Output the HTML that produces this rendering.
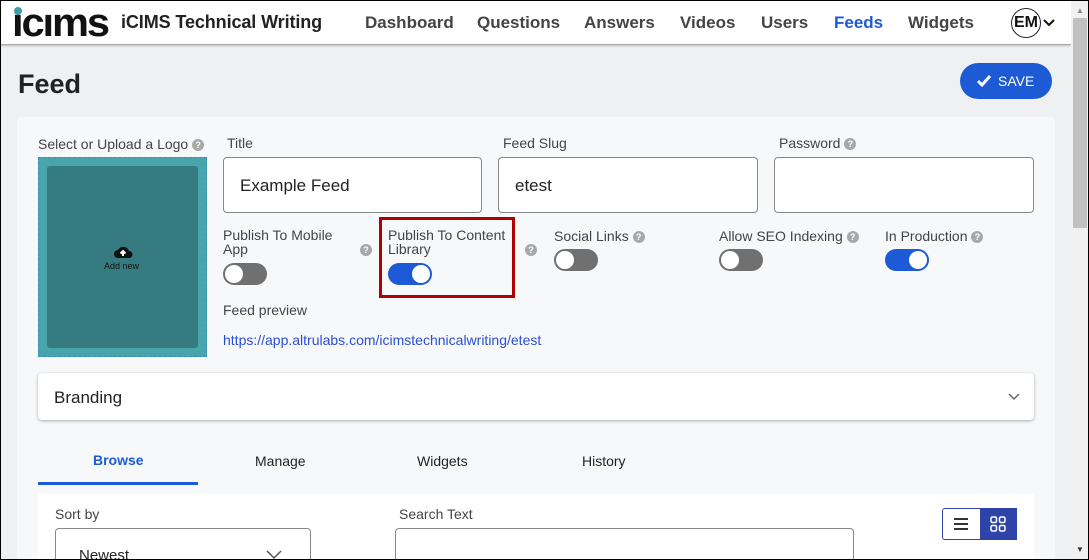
<!DOCTYPE html>
<html><head><meta charset="utf-8"><style>
*{box-sizing:border-box;margin:0;padding:0}
html{width:1089px;height:560px;overflow:hidden}
body{width:1089px;height:560px;overflow:hidden;font-family:"Liberation Sans",Arial,sans-serif;background:#eef0f1;position:relative;color:#333}
.frame{position:absolute;left:0;top:0;width:1089px;height:560px;border:1px solid #000;pointer-events:none;z-index:10}
.abs{position:absolute}
.hdr{position:absolute;left:0;top:0;width:1071px;height:45px;background:#fff;border-bottom:1px solid #aaa;box-shadow:0 1px 2px rgba(0,0,0,.2)}
.nav{position:absolute;top:13px;font-size:17px;font-weight:bold;color:#444}
.sb{position:absolute;left:1071px;top:0;width:18px;height:560px;background:#f0f0f0}
.card{position:absolute;left:17px;top:117px;width:1038px;height:443px;background:#f7f8f9;border-radius:4px}
.lbl{position:absolute;font-size:14px;color:#444}
.q{display:inline-block;width:12px;height:12px;border-radius:50%;background:#a8a8a8;color:#fff;font-size:9px;font-weight:bold;text-align:center;line-height:12px;vertical-align:middle}
.inp{position:absolute;height:56px;background:#fff;border:1px solid #888;border-radius:4px;font-size:17px;color:#222;padding:18px 16px}
.tg{position:absolute;width:44px;height:22px;border-radius:11px;background:#707070}
.tg::after{content:"";position:absolute;left:2px;top:2px;width:18px;height:18px;border-radius:50%;background:#fff}
.tg.on{background:#1d5bd6}
.tg.on::after{left:24px}
</style></head><body>
<div class="hdr">
  <div class="abs" style="left:12px;top:3px;font-size:40px;font-weight:bold;color:#111;letter-spacing:-2px;line-height:40px;transform:scaleX(1.04);transform-origin:left">ıcıms</div>
  <div class="abs" style="left:14px;top:7px;width:8px;height:8px;border-radius:50%;background:#3aa0a6"></div>
  <div class="abs" style="left:121px;top:12px;font-size:18px;font-weight:bold;color:#222;letter-spacing:-0.1px">iCIMS Technical Writing</div>
  <div class="nav" style="left:365px">Dashboard</div>
  <div class="nav" style="left:477px">Questions</div>
  <div class="nav" style="left:584px">Answers</div>
  <div class="nav" style="left:680px">Videos</div>
  <div class="nav" style="left:761px">Users</div>
  <div class="nav" style="left:834px;color:#1d5bd6">Feeds</div>
  <div class="nav" style="left:908px">Widgets</div>
  <div class="abs" style="left:1011px;top:8px;width:30px;height:30px;border-radius:50%;border:1.5px solid #223;font-size:16px;font-weight:bold;color:#111;text-align:center;line-height:27px">EM</div>
  <svg class="abs" style="left:1042px;top:18px" width="14" height="10"><path d="M2 2l5 5 5-5" stroke="#111" stroke-width="2" fill="none"/></svg>
</div>
<div class="sb"><div class="abs" style="left:2px;top:18px;width:14px;height:210px;background:#c1c1c1"></div>
<div class="abs" style="left:5px;top:6px;font-size:8px;color:#888">▲</div><div class="abs" style="left:5px;top:545px;font-size:8px;color:#333">▼</div></div>
<div class="abs" style="left:18px;top:69px;font-size:27px;font-weight:bold;color:#222">Feed</div>
<div class="abs" style="left:960px;top:63px;width:92px;height:36px;border-radius:18px;background:#1d5bd6;color:#fff;font-size:14px;line-height:36px;padding-left:38px">SAVE</div>
<svg class="abs" style="left:976px;top:74px" width="16" height="14"><path d="M2 7l4 4 8-9" stroke="#fff" stroke-width="3" fill="none"/></svg>
<div class="card"></div>
<div class="lbl" style="left:38px;top:136px">Select or Upload a Logo <span class="q">?</span></div>
<div class="abs" style="left:38px;top:157px;width:169px;height:200px;background:#47a5ab;border:1px dashed #3a8fc7"></div>
<div class="abs" style="left:47px;top:166px;width:151px;height:182px;background:#367b80;border-radius:3px"></div>
<svg class="abs" style="left:113px;top:244px" width="20" height="16"><path d="M5 14a4 4 0 0 1 0-8 6 6 0 0 1 11 1 3.5 3.5 0 0 1 0 7z" fill="#111"/><path d="M10 12V7M7.5 9.5L10 7l2.5 2.5" stroke="#fff" stroke-width="2" fill="none"/></svg>
<div class="abs" style="left:104px;top:261px;font-size:9px;color:#111">Add new</div>
<div class="lbl" style="left:227px;top:135px">Title</div>
<div class="lbl" style="left:503px;top:135px">Feed Slug</div>
<div class="lbl" style="left:779px;top:135px">Password <span class="q">?</span></div>
<div class="inp" style="left:223px;top:157px;width:259px">Example Feed</div>
<div class="inp" style="left:498px;top:157px;width:260px">etest</div>
<div class="inp" style="left:774px;top:157px;width:260px"></div>
<div class="lbl" style="left:223px;top:228px;line-height:14px">Publish To Mobile<br>App</div><span class="q abs" style="left:360px;top:244px">?</span>
<div class="tg" style="left:223px;top:263px"></div>
<div class="lbl" style="left:388px;top:228px;line-height:14px">Publish To Content<br>Library</div><span class="q abs" style="left:525px;top:244px">?</span>
<div class="tg on" style="left:388px;top:263px"></div>
<div class="abs" style="left:379px;top:217px;width:136px;height:81px;border:3px solid #b00000"></div>
<div class="lbl" style="left:554px;top:228px">Social Links <span class="q">?</span></div>
<div class="tg" style="left:554px;top:249px"></div>
<div class="lbl" style="left:719px;top:228px">Allow SEO Indexing <span class="q">?</span></div>
<div class="tg" style="left:719px;top:249px"></div>
<div class="lbl" style="left:885px;top:228px">In Production <span class="q">?</span></div>
<div class="tg on" style="left:885px;top:249px"></div>
<div class="lbl" style="left:223px;top:302px">Feed preview</div>
<div class="lbl" style="left:223px;top:332px;color:#2b4fd0">https://app.altrulabs.com/icimstechnicalwriting/etest</div>
<div class="abs" style="left:38px;top:373px;width:996px;height:47px;background:#fff;border-radius:4px;box-shadow:0 1px 3px rgba(0,0,0,.3)"></div>
<div class="abs" style="left:54px;top:388px;font-size:17px;color:#222">Branding</div>
<svg class="abs" style="left:1007px;top:392px" width="14" height="10"><path d="M2 2l5 5 5-5" stroke="#666" stroke-width="1.5" fill="none"/></svg>
<div class="abs" style="left:93px;top:452px;font-size:14px;font-weight:bold;color:#1d5bd6">Browse</div>
<div class="abs" style="left:38px;top:482px;width:160px;height:3px;background:#1d5bd6"></div>
<div class="lbl" style="left:255px;top:453px;color:#222">Manage</div>
<div class="lbl" style="left:417px;top:453px;color:#222">Widgets</div>
<div class="lbl" style="left:582px;top:453px;color:#222">History</div>
<div class="abs" style="left:38px;top:494px;width:996px;height:66px;background:#fff"></div>
<div class="lbl" style="left:55px;top:506px">Sort by</div>
<div class="lbl" style="left:399px;top:506px">Search Text</div>
<div class="abs" style="left:55px;top:528px;width:256px;height:40px;border:1px solid #888;border-radius:4px;background:#fff"></div>
<div class="abs" style="left:79px;top:547px;font-size:15px;color:#222">Newest</div>
<svg class="abs" style="left:265px;top:550px" width="18" height="10"><path d="M2 1l7 7 7-7" stroke="#555" stroke-width="1.5" fill="none"/></svg>
<div class="abs" style="left:395px;top:528px;width:459px;height:40px;border:1px solid #888;border-radius:4px;background:#fff"></div>
<div class="abs" style="left:942px;top:508px;width:75px;height:32px;border:1px solid #2e44a8;border-radius:3px;background:#fff"></div>
<div class="abs" style="left:980px;top:508px;width:37px;height:32px;background:#2e44a8"></div>
<svg class="abs" style="left:952px;top:516px" width="18" height="16"><path d="M2 3h14M2 8h14M2 13h14" stroke="#333" stroke-width="2"/></svg>
<svg class="abs" style="left:990px;top:516px" width="16" height="16"><g fill="none" stroke="#fff" stroke-width="1.5"><rect x="1" y="1" width="5.5" height="5.5" rx="1.5"/><rect x="9.5" y="1" width="5.5" height="5.5" rx="1.5"/><rect x="1" y="9.5" width="5.5" height="5.5" rx="1.5"/><rect x="9.5" y="9.5" width="5.5" height="5.5" rx="1.5"/></g></svg>
<div class="frame"></div>
</body></html>
